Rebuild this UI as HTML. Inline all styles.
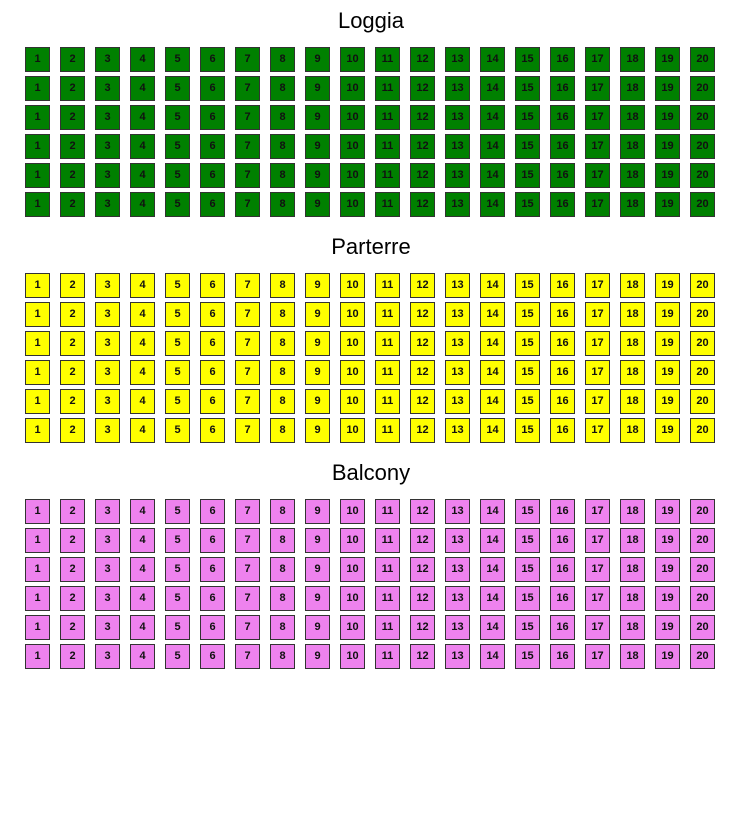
<!DOCTYPE html>
<html><head><meta charset="utf-8"><style>
body{margin:0;width:742px;height:835px;background:#fff;font-family:"Liberation Sans",sans-serif;position:relative;overflow:hidden}
h2{position:absolute;left:0;width:742px;margin:0;text-align:center;font-weight:normal;font-size:22px;line-height:26px;color:#000}
.sec{position:absolute;left:25px}
.r{display:flex;height:25px;margin-bottom:4px}
.r b{box-sizing:border-box;width:25px;height:25px;margin-right:10px;border:1px solid #333;font-size:11px;font-weight:bold;text-align:center;line-height:23px;color:#111}
.g b{background:#008000}.y b{background:#ffff00}.v b{background:#ee82ee}
</style></head><body>
<h2 style="top:8px">Loggia</h2>
<div class="sec g" style="top:47px">
<div class="r"><b>1</b><b>2</b><b>3</b><b>4</b><b>5</b><b>6</b><b>7</b><b>8</b><b>9</b><b>10</b><b>11</b><b>12</b><b>13</b><b>14</b><b>15</b><b>16</b><b>17</b><b>18</b><b>19</b><b>20</b></div>
<div class="r"><b>1</b><b>2</b><b>3</b><b>4</b><b>5</b><b>6</b><b>7</b><b>8</b><b>9</b><b>10</b><b>11</b><b>12</b><b>13</b><b>14</b><b>15</b><b>16</b><b>17</b><b>18</b><b>19</b><b>20</b></div>
<div class="r"><b>1</b><b>2</b><b>3</b><b>4</b><b>5</b><b>6</b><b>7</b><b>8</b><b>9</b><b>10</b><b>11</b><b>12</b><b>13</b><b>14</b><b>15</b><b>16</b><b>17</b><b>18</b><b>19</b><b>20</b></div>
<div class="r"><b>1</b><b>2</b><b>3</b><b>4</b><b>5</b><b>6</b><b>7</b><b>8</b><b>9</b><b>10</b><b>11</b><b>12</b><b>13</b><b>14</b><b>15</b><b>16</b><b>17</b><b>18</b><b>19</b><b>20</b></div>
<div class="r"><b>1</b><b>2</b><b>3</b><b>4</b><b>5</b><b>6</b><b>7</b><b>8</b><b>9</b><b>10</b><b>11</b><b>12</b><b>13</b><b>14</b><b>15</b><b>16</b><b>17</b><b>18</b><b>19</b><b>20</b></div>
<div class="r"><b>1</b><b>2</b><b>3</b><b>4</b><b>5</b><b>6</b><b>7</b><b>8</b><b>9</b><b>10</b><b>11</b><b>12</b><b>13</b><b>14</b><b>15</b><b>16</b><b>17</b><b>18</b><b>19</b><b>20</b></div>
</div>
<h2 style="top:234px">Parterre</h2>
<div class="sec y" style="top:273px">
<div class="r"><b>1</b><b>2</b><b>3</b><b>4</b><b>5</b><b>6</b><b>7</b><b>8</b><b>9</b><b>10</b><b>11</b><b>12</b><b>13</b><b>14</b><b>15</b><b>16</b><b>17</b><b>18</b><b>19</b><b>20</b></div>
<div class="r"><b>1</b><b>2</b><b>3</b><b>4</b><b>5</b><b>6</b><b>7</b><b>8</b><b>9</b><b>10</b><b>11</b><b>12</b><b>13</b><b>14</b><b>15</b><b>16</b><b>17</b><b>18</b><b>19</b><b>20</b></div>
<div class="r"><b>1</b><b>2</b><b>3</b><b>4</b><b>5</b><b>6</b><b>7</b><b>8</b><b>9</b><b>10</b><b>11</b><b>12</b><b>13</b><b>14</b><b>15</b><b>16</b><b>17</b><b>18</b><b>19</b><b>20</b></div>
<div class="r"><b>1</b><b>2</b><b>3</b><b>4</b><b>5</b><b>6</b><b>7</b><b>8</b><b>9</b><b>10</b><b>11</b><b>12</b><b>13</b><b>14</b><b>15</b><b>16</b><b>17</b><b>18</b><b>19</b><b>20</b></div>
<div class="r"><b>1</b><b>2</b><b>3</b><b>4</b><b>5</b><b>6</b><b>7</b><b>8</b><b>9</b><b>10</b><b>11</b><b>12</b><b>13</b><b>14</b><b>15</b><b>16</b><b>17</b><b>18</b><b>19</b><b>20</b></div>
<div class="r"><b>1</b><b>2</b><b>3</b><b>4</b><b>5</b><b>6</b><b>7</b><b>8</b><b>9</b><b>10</b><b>11</b><b>12</b><b>13</b><b>14</b><b>15</b><b>16</b><b>17</b><b>18</b><b>19</b><b>20</b></div>
</div>
<h2 style="top:460px">Balcony</h2>
<div class="sec v" style="top:499px">
<div class="r"><b>1</b><b>2</b><b>3</b><b>4</b><b>5</b><b>6</b><b>7</b><b>8</b><b>9</b><b>10</b><b>11</b><b>12</b><b>13</b><b>14</b><b>15</b><b>16</b><b>17</b><b>18</b><b>19</b><b>20</b></div>
<div class="r"><b>1</b><b>2</b><b>3</b><b>4</b><b>5</b><b>6</b><b>7</b><b>8</b><b>9</b><b>10</b><b>11</b><b>12</b><b>13</b><b>14</b><b>15</b><b>16</b><b>17</b><b>18</b><b>19</b><b>20</b></div>
<div class="r"><b>1</b><b>2</b><b>3</b><b>4</b><b>5</b><b>6</b><b>7</b><b>8</b><b>9</b><b>10</b><b>11</b><b>12</b><b>13</b><b>14</b><b>15</b><b>16</b><b>17</b><b>18</b><b>19</b><b>20</b></div>
<div class="r"><b>1</b><b>2</b><b>3</b><b>4</b><b>5</b><b>6</b><b>7</b><b>8</b><b>9</b><b>10</b><b>11</b><b>12</b><b>13</b><b>14</b><b>15</b><b>16</b><b>17</b><b>18</b><b>19</b><b>20</b></div>
<div class="r"><b>1</b><b>2</b><b>3</b><b>4</b><b>5</b><b>6</b><b>7</b><b>8</b><b>9</b><b>10</b><b>11</b><b>12</b><b>13</b><b>14</b><b>15</b><b>16</b><b>17</b><b>18</b><b>19</b><b>20</b></div>
<div class="r"><b>1</b><b>2</b><b>3</b><b>4</b><b>5</b><b>6</b><b>7</b><b>8</b><b>9</b><b>10</b><b>11</b><b>12</b><b>13</b><b>14</b><b>15</b><b>16</b><b>17</b><b>18</b><b>19</b><b>20</b></div>
</div>
</body></html>
